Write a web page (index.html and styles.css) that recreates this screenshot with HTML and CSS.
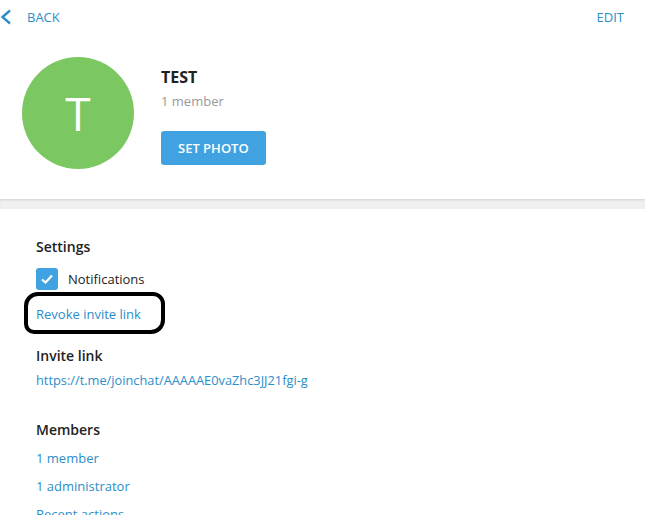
FILE: index.html
```html
<!DOCTYPE html>
<html lang="en">
<head>
  <meta charset="UTF-8">
  <title>Group info</title>
  <link rel="stylesheet" href="styles.css">
</head>
<body>
  <div class="topbar">
    <a class="back">
      <svg class="chevron" width="12" height="16" viewBox="0 0 12 16">
        <polyline points="10,1.5 2.5,8 10,14.5" fill="none" stroke="#2b8ec9" stroke-width="2.4"/>
      </svg>
      <span>BACK</span>
    </a>
    <a class="edit">EDIT</a>
  </div>

  <div class="profile">
    <div class="avatar">T</div>
    <div class="info">
      <div class="name">TEST</div>
      <div class="count">1 member</div>
      <button class="set-photo">SET PHOTO</button>
    </div>
  </div>

  <div class="divider"></div>

  <div class="details">
    <div class="heading">Settings</div>
    <label class="check-row">
      <span class="checkbox">
        <svg width="14" height="12" viewBox="0 0 14 12">
          <polyline points="2,6.5 5.5,9.5 12,2.5" fill="none" stroke="#fff" stroke-width="2.2"/>
        </svg>
      </span>
      <span>Notifications</span>
    </label>
    <div class="revoke-row">
      <span class="marker"><a class="link">Revoke invite link</a></span>
    </div>

    <div class="heading invite">Invite link</div>
    <a class="link url">https://t.me/joinchat/AAAAAE0vaZhc3JJ21fgi-g</a>

    <div class="heading members">Members</div>
    <a class="link item">1 member</a>
    <a class="link item">1 administrator</a>
    <a class="link item">Recent actions</a>
  </div>
</body>
</html>
```

FILE: styles.css
```css
body, html {
  margin: 0;
  padding: 0;
  height: 100%;
  overflow: hidden;
  font-family: 'Open Sans', 'Noto Sans', sans-serif;
  background: #fff;
  color: #222;
}

.topbar {
  display: flex;
  justify-content: space-between;
  align-items: center;
  height: 34px;
  padding: 0 21px 1px 0;
}

.back, .edit {
  color: #2b8ec9;
  font-size: 13px;
  cursor: pointer;
}

.back {
  display: flex;
  align-items: center;
}

.chevron {
  margin: 0 15px 0 0;
}

.profile {
  display: flex;
  align-items: flex-start;
  padding: 22px 0 30px 22px;
}

.avatar {
  width: 112px;
  height: 112px;
  border-radius: 50%;
  background: #7bc862;
  color: #fff;
  font-size: 46px;
  line-height: 112px;
  text-align: center;
}

.info {
  display: flex;
  flex-direction: column;
  align-items: flex-start;
  margin-left: 27px;
}

.name {
  font-size: 16px;
  font-weight: 700;
  line-height: 20px;
  margin-top: 10px;
}

.count {
  font-size: 13px;
  color: #999;
  line-height: 20px;
  margin-top: 4px;
}

.set-photo {
  margin-top: 20px;
  height: 34px;
  padding: 0 17px;
  border: none;
  border-radius: 3px;
  background: #40a2e0;
  color: #fff;
  font-family: inherit;
  font-size: 13px;
  font-weight: 600;
  cursor: pointer;
}

.divider {
  height: 9px;
  background: #f0f0f0;
  border-top: 1px solid #dcdcdc;
  box-shadow: inset 0 1px 2px rgba(0, 0, 0, 0.06);
}

.details {
  display: flex;
  flex-direction: column;
  align-items: flex-start;
  padding: 28px 0 0 36px;
}

.heading {
  font-size: 14px;
  font-weight: 600;
  line-height: 20px;
  color: #222;
}

.check-row {
  display: flex;
  align-items: center;
  margin-top: 11px;
  font-size: 13px;
  line-height: 22px;
}

.checkbox {
  display: flex;
  align-items: center;
  justify-content: center;
  width: 22px;
  height: 22px;
  border-radius: 3px;
  background: #40a2e0;
  margin-right: 10px;
}

.link {
  color: #2b8ec9;
  font-size: 13px;
  line-height: 20px;
  cursor: pointer;
}

.url {
  font-size: 12.8px;
}

.revoke-row {
  margin-top: 12px;
  height: 20px;
}

.marker {
  display: inline-block;
  margin: -10px -24px -10px -12px;
  padding: 6px 20px 6px 8px;
  border: 4px solid #000;
  border-radius: 14px 12px 14px 10px;
}

.invite {
  margin-top: 24px;
}

.url {
  margin-top: 4px;
}

.members {
  margin-top: 30px;
}

.item {
  margin-top: 8px;
}
```
